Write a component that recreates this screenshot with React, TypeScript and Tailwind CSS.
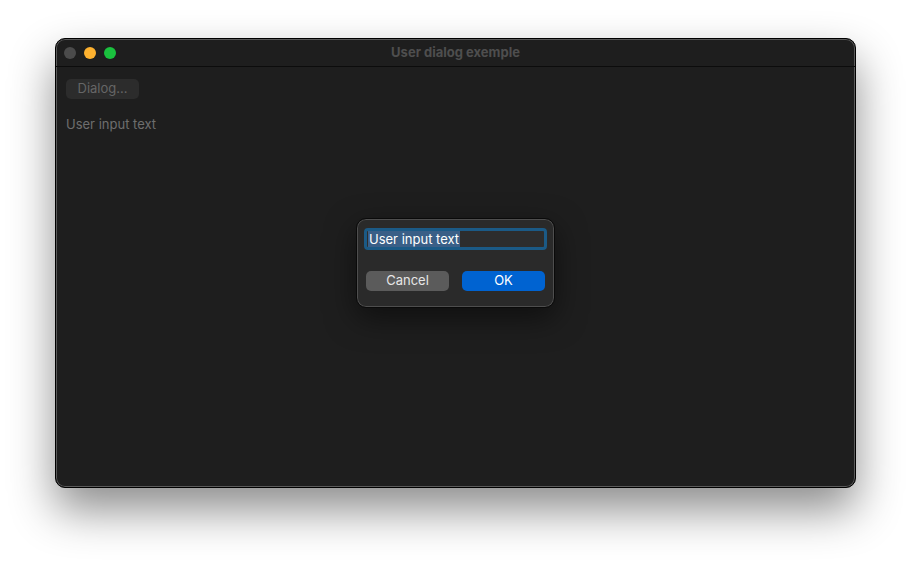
import React from "react";

export default function App() {
  const font = { fontFamily: "Inter, 'Liberation Sans', sans-serif" };
  return (
    <div className="w-[912px] h-[562px] bg-white pt-[38px] pl-[55px]" style={font}>
      <div className="relative w-[801px] h-[450px] rounded-[10px] bg-[#1e1e1e] border border-[#000] shadow-[0_0_0_1px_#5a5a5a_inset,0_22px_45px_rgba(0,0,0,0.45)] overflow-hidden">
        <div className="relative h-[28px] flex items-center border-b border-[#0c0c0c]">
          <div className="flex gap-[8px] pl-[8px]">
            <div className="w-[12px] h-[12px] rounded-full bg-[#4b4b4b]" />
            <div className="w-[12px] h-[12px] rounded-full bg-[#fdb12f]" />
            <div className="w-[12px] h-[12px] rounded-full bg-[#1ac13e]" />
          </div>
          <div className="absolute inset-0 flex items-center justify-center text-[13px] font-bold text-[#4e4e4e]">
            User dialog exemple
          </div>
        </div>
        <div className="px-[10px] pt-[12px]">
          <div className="w-[73px] h-[20px] rounded-[5px] bg-[#2c2c2c] text-[#666] text-[13px] flex items-center justify-center">
            Dialog...
          </div>
          <div className="mt-[16px] text-[13px] text-[#6e6e6e]">User input text</div>
        </div>
        <div className="absolute left-[300px] top-[179px] w-[199px] h-[90px] rounded-[10px] bg-[#2a2a2a] border border-[#0a0a0a] shadow-[inset_0_0_0_1px_#4e4e4e,0_10px_30px_rgba(0,0,0,0.5)] px-[7px] pt-[9px]">
          <div className="h-[22px] w-[183px] rounded-[4px] bg-[#2d2d2d] border-[3px] border-[#1b5a86] flex items-center pl-[1px]">
            <span className="bg-[#3a5f87] text-white text-[13px] leading-[16px] px-[1px]">User input text</span>
          </div>
          <div className="mt-[21px] flex justify-between px-[2px]">
            <div className="w-[83px] h-[20px] rounded-[5px] bg-[#5b5b5b] text-[#e6e6e6] text-[13px] flex items-center justify-center">Cancel</div>
            <div className="w-[83px] h-[20px] rounded-[5px] bg-[#0063d1] text-white text-[13px] flex items-center justify-center">OK</div>
          </div>
        </div>
      </div>
    </div>
  );
}
